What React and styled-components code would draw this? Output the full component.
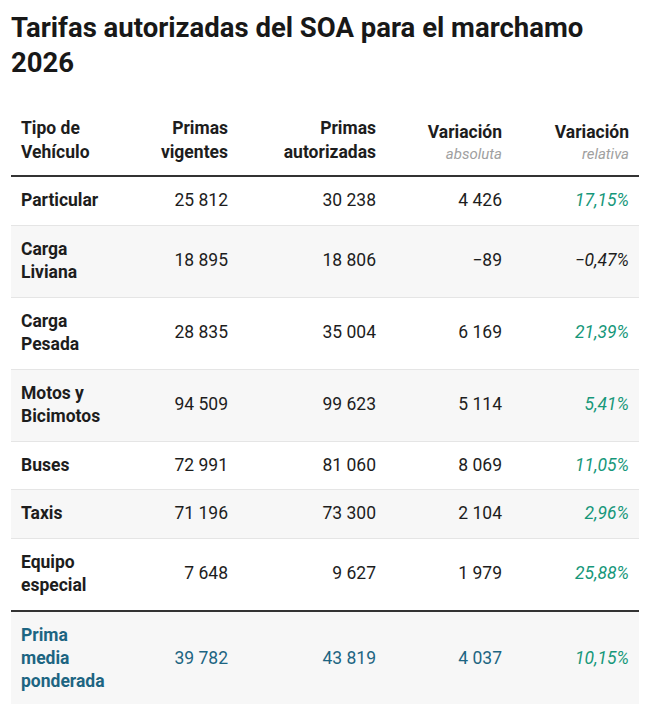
import styled, { createGlobalStyle } from "styled-components";

const GlobalStyle = createGlobalStyle`
	body {
		margin: 0;
		background: #fff;
		font-family: Roboto, "Liberation Sans", sans-serif;
		color: #1d1d1d;
	}
`;

const rows = [
	{ tipo: "Particular", vig: "25 812", aut: "30 238", abs: "4 426", rel: "17,15%", up: true },
	{ tipo: "Carga Liviana", vig: "18 895", aut: "18 806", abs: "−89", rel: "−0,47%", up: false },
	{ tipo: "Carga Pesada", vig: "28 835", aut: "35 004", abs: "6 169", rel: "21,39%", up: true },
	{ tipo: "Motos y Bicimotos", vig: "94 509", aut: "99 623", abs: "5 114", rel: "5,41%", up: true },
	{ tipo: "Buses", vig: "72 991", aut: "81 060", abs: "8 069", rel: "11,05%", up: true },
	{ tipo: "Taxis", vig: "71 196", aut: "73 300", abs: "2 104", rel: "2,96%", up: true },
	{ tipo: "Equipo especial", vig: "7 648", aut: "9 627", abs: "1 979", rel: "25,88%", up: true },
];

// column widths, in px, summing to the table width
const widths = [114, 113, 148, 126, 127];

const App = () => {
	return (
		<Wrapper>
			<GlobalStyle />
			<Title>Tarifas autorizadas del SOA para el marchamo 2026</Title>
			<Table>
				<colgroup>
					{widths.map((w, i) => (
						<col key={i} style={{ width: w }} />
					))}
				</colgroup>
				<thead>
					<tr>
						<Th>Tipo de Vehículo</Th>
						<Th $right>Primas vigentes</Th>
						<Th $right>Primas autorizadas</Th>
						<Th $right>
							Variación
							<Sub>absoluta</Sub>
						</Th>
						<Th $right>
							Variación
							<Sub>relativa</Sub>
						</Th>
					</tr>
				</thead>
				<tbody>
					{rows.map((r, i) => (
						<Row key={r.tipo} $striped={i % 2 === 1}>
							<Name>{r.tipo}</Name>
							<Num>{r.vig}</Num>
							<Num>{r.aut}</Num>
							<Num>{r.abs}</Num>
							<Pct $up={r.up}>{r.rel}</Pct>
						</Row>
					))}
				</tbody>
				<tfoot>
					<TotalRow>
						<Name $total>Prima media ponderada</Name>
						<Num $total>39 782</Num>
						<Num $total>43 819</Num>
						<Num $total>4 037</Num>
						<Pct $up>10,15%</Pct>
					</TotalRow>
				</tfoot>
			</Table>
		</Wrapper>
	);
};
export default App;

const Wrapper = styled.div`
	padding: 10px 24px 0 11px;
	width: 628px;
`;

const Title = styled.h1`
	margin: 0 0 33px;
	font-size: 27.5px;
	line-height: 35px;
	font-weight: 700;
	color: #181818;
`;

const Table = styled.table`
	width: 628px;
	border-collapse: collapse;
	table-layout: fixed;
	font-size: 17.5px;
	line-height: 23.5px;
`;

const Th = styled.th`
	padding: 4px 10px 11px;
	text-align: ${(p) => (p.$right ? "right" : "left")};
	vertical-align: bottom;
	font-weight: 700;
	color: #1d1d1d;
	border-bottom: 2px solid #333;
`;

const Sub = styled.span`
	display: block;
	font-size: 15px;
	line-height: 20px;
	font-style: italic;
	font-weight: 400;
	color: #a0a0a0;
`;

const Row = styled.tr`
	background: ${(p) => (p.$striped ? "#f7f7f7" : "#fff")};
	border-bottom: 1px solid #e5e5e5;
	&:last-child {
		border-bottom: none;
	}
`;

const TotalRow = styled.tr`
	background: #f7f7f7;
	border-top: 2px solid #333;
	line-height: 23px;
`;

const Cell = styled.td`
	padding: 12px 10px;
	vertical-align: middle;
`;

const Name = styled(Cell)`
	font-weight: 700;
	color: ${(p) => (p.$total ? "#1d6582" : "#1d1d1d")};
`;

const Num = styled(Cell)`
	text-align: right;
	color: ${(p) => (p.$total ? "#1d6582" : "#1d1d1d")};
`;

const Pct = styled(Cell)`
	text-align: right;
	font-style: italic;
	color: ${(p) => (p.$up ? "#16977a" : "#1d1d1d")};
`;
